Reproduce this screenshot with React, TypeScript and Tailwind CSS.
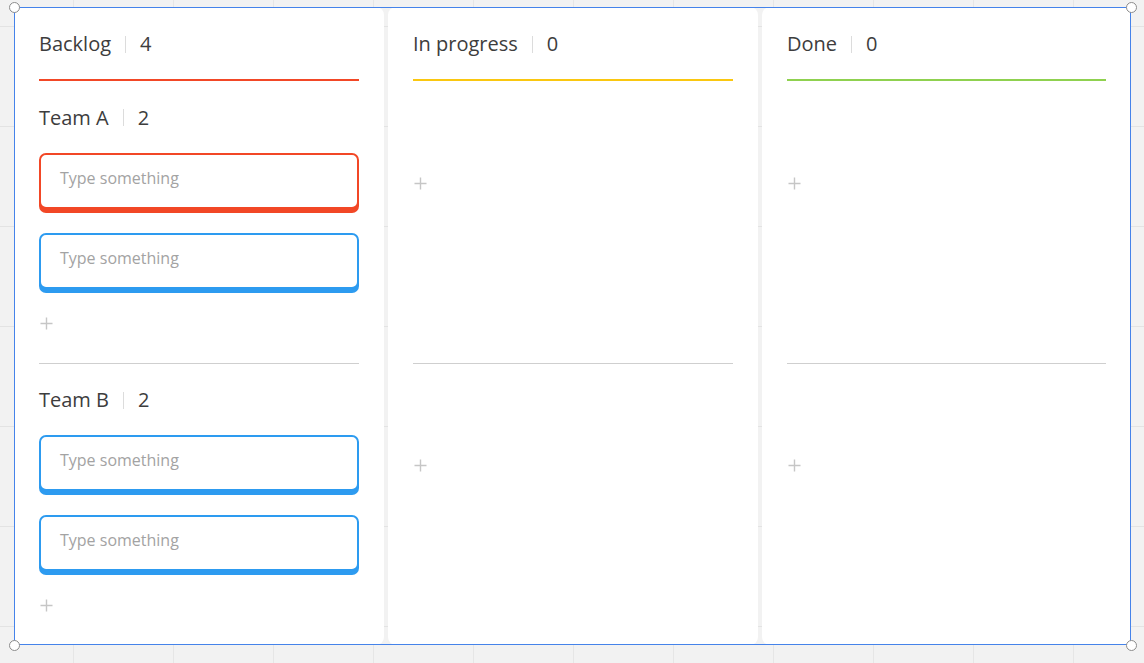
import React from "react";

const FONT = { fontFamily: '"Open Sans", "Noto Sans", "Liberation Sans", sans-serif' };

function Plus() {
  return (
    <svg width="13" height="13" viewBox="0 0 13 13" className="ml-[1px]">
      <path d="M6.5 0.5v12M0.5 6.5h12" stroke="#c6c6c6" strokeWidth="1.4" fill="none" />
    </svg>
  );
}

function Count({ label, n }: { label: string; n: number }) {
  return (
    <div className="flex items-center text-[20px] leading-[28px] text-[#3d3d3d]">
      <span>{label}</span>
      <span className="mx-[14px] h-[17px] w-px bg-[#dcdcdc]" />
      <span>{n}</span>
    </div>
  );
}

type CardColor = "red" | "blue";

function Card({ color }: { color: CardColor }) {
  const cls =
    color === "red"
      ? "border-[#f24726] shadow-[0_4px_0_0_#f24726]"
      : "border-[#2d9bf0] shadow-[0_4px_0_0_#2d9bf0]";
  return (
    <div className={`h-[56px] rounded-[7px] border-2 bg-white pl-[19px] pt-[12px] text-[16px] leading-[22px] text-[#a3a3a3] ${cls}`}>
      Type something
    </div>
  );
}

function Lane({
  team,
  cards,
  divider,
}: {
  team?: { name: string; n: number };
  cards: CardColor[];
  divider?: boolean;
}) {
  return (
    <div className={`flex h-[282px] flex-col ${divider ? "border-t border-[#cfcfcf]" : ""}`}>
      <div className={`flex shrink-0 items-center pt-[1px] ${divider ? "h-[71px]" : "h-[72px]"}`}>
        {team && <Count label={team.name} n={team.n} />}
      </div>
      {cards.length > 0 && (
        <div className="flex flex-col gap-[24px]">
          {cards.map((c, i) => (
            <Card key={i} color={c} />
          ))}
        </div>
      )}
      <div className={`flex h-[60px] items-center ${cards.length > 0 ? "mt-[4px]" : ""}`}>
        <Plus />
      </div>
    </div>
  );
}

function Column({
  title,
  n,
  lineCls,
  lanes,
}: {
  title: string;
  n: number;
  lineCls: string;
  lanes: { team?: { name: string; n: number }; cards: CardColor[] }[];
}) {
  return (
    <div className="flex flex-col rounded-[8px] bg-white px-[25px]">
      <div className="flex h-[72px] items-center pt-[2px]">
        <Count label={title} n={n} />
      </div>
      <div className={`h-[2px] ${lineCls}`} />
      <Lane team={lanes[0].team} cards={lanes[0].cards} />
      <Lane team={lanes[1].team} cards={lanes[1].cards} divider />
    </div>
  );
}

function Handle({ cls }: { cls: string }) {
  return (
    <div
      className={`absolute h-[11px] w-[11px] rounded-full border-[1.5px] border-[#8c8c8c] bg-white ${cls}`}
    />
  );
}

export default function App() {
  return (
    <div
      style={FONT}
      className="h-[663px] w-[1144px] overflow-hidden bg-[#f2f2f2] bg-[linear-gradient(to_right,#e6e6e6_1px,transparent_1px),linear-gradient(to_bottom,#e3e3e3_1px,transparent_1px)] bg-[size:100px_100px] bg-[position:73px_26px] pt-[7px] pl-[14px]"
    >
      <div className="relative h-[638px] w-[1117px]">
        <div className="grid h-full grid-cols-[370px_370px_369px] gap-[4px]">
          <Column
            title="Backlog"
            n={4}
            lineCls="bg-[#f24726]"
            lanes={[
              { team: { name: "Team A", n: 2 }, cards: ["red", "blue"] },
              { team: { name: "Team B", n: 2 }, cards: ["blue", "blue"] },
            ]}
          />
          <Column
            title="In progress"
            n={0}
            lineCls="bg-[#fac710]"
            lanes={[{ cards: [] }, { cards: [] }]}
          />
          <Column
            title="Done"
            n={0}
            lineCls="bg-[#8fd14f]"
            lanes={[{ cards: [] }, { cards: [] }]}
          />
        </div>
        <div className="pointer-events-none absolute inset-0 border border-[#4583ea]" />
        <Handle cls="left-[-5px] top-[-5px]" />
        <Handle cls="right-[-6px] top-[-5px]" />
        <Handle cls="left-[-5px] bottom-[-6px]" />
        <Handle cls="right-[-6px] bottom-[-6px]" />
      </div>
    </div>
  );
}
